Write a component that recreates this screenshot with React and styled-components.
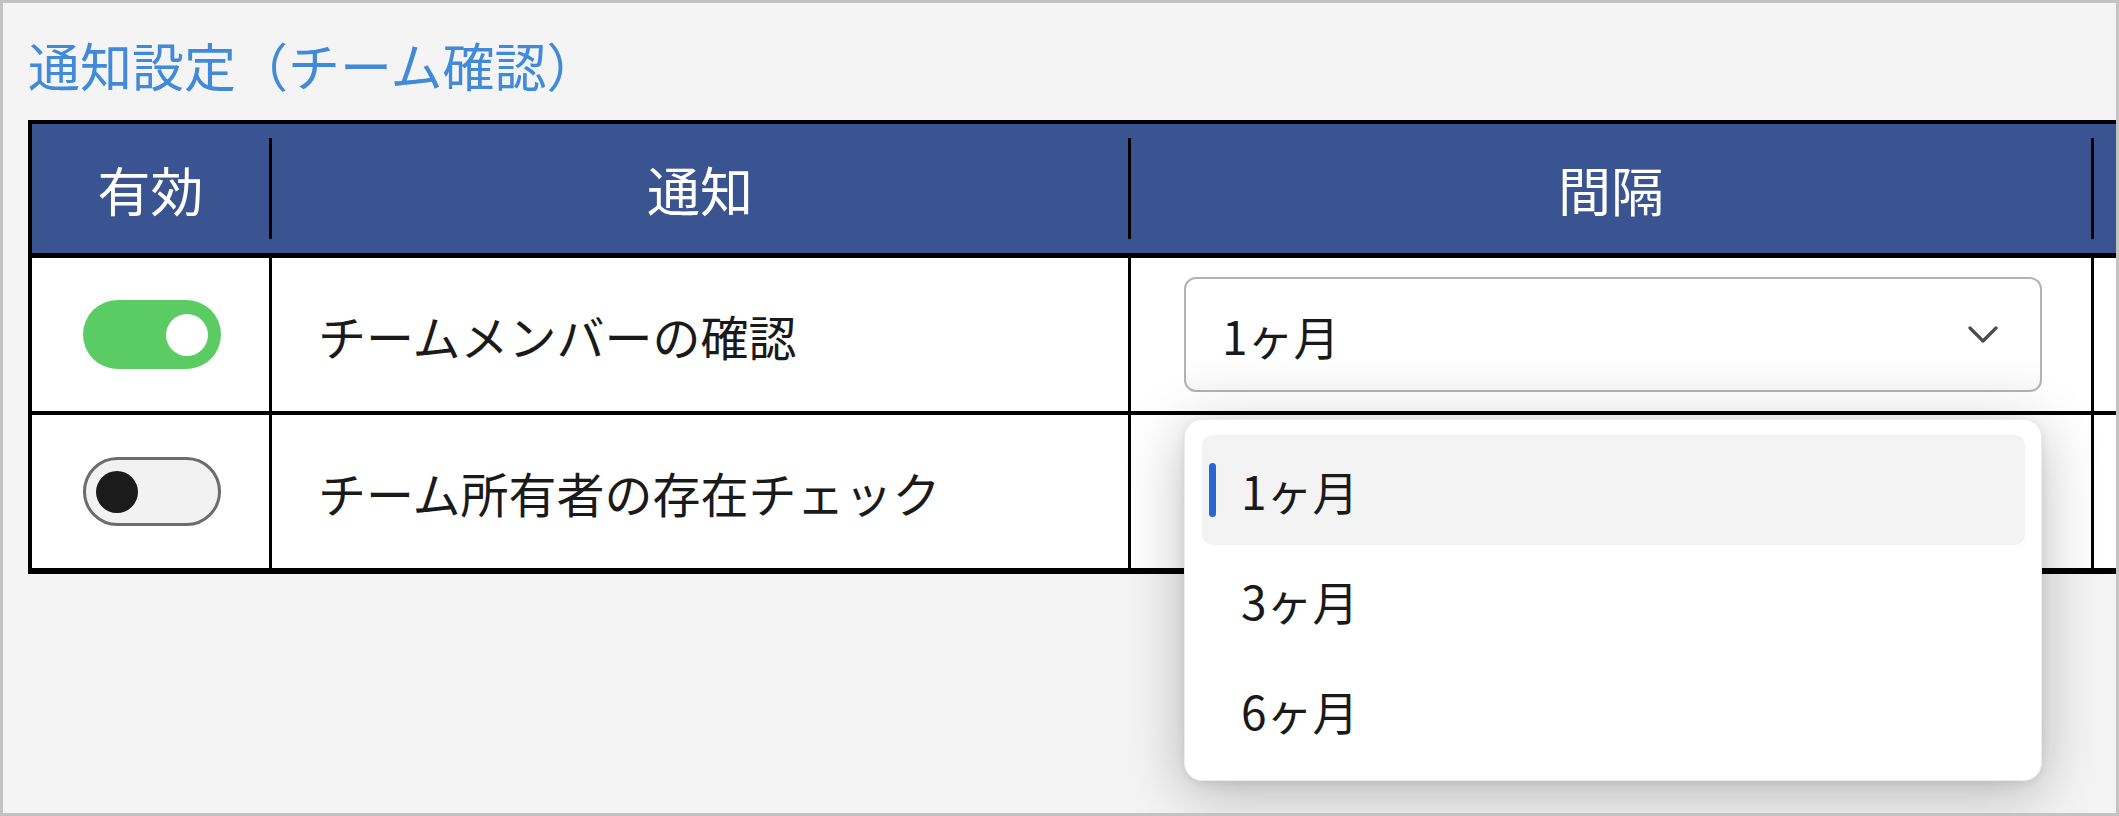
import React from 'react'
import styled, { createGlobalStyle } from 'styled-components'

const GlobalStyle = createGlobalStyle`
  body {
    margin: 0;
    background: #f4f4f4;
    font-family: "Noto Sans CJK JP", "Noto Sans", sans-serif;
  }
`

const COLS = '237px 859px 963px 200px'

const Frame = styled.div`
  width: 2119px;
  height: 816px;
  box-sizing: border-box;
  border: 3px solid #c3c3c3;
  background: #f4f4f4;
  overflow: hidden;
  padding: 31px 0 0 25px;
`

const Title = styled.h2`
  margin: 0 0 25px;
  font-size: 52px;
  line-height: 61px;
  font-weight: 400;
  color: #4189d9;
  white-space: nowrap;
`

const Table = styled.div`
  display: flex;
  flex-direction: column;
  width: max-content;
  border: 4px solid #000;
  border-bottom-width: 6px;
  background: #fff;
`

const HeaderRow = styled.div`
  display: grid;
  grid-template-columns: ${COLS};
  padding: 14px 0;
  background: #3a5491;
  border-bottom: 5px solid #000;
`

const HeadCell = styled.div`
  height: 101px;
  box-sizing: border-box;
  display: flex;
  align-items: center;
  justify-content: center;
  color: #fff;
  font-size: 53px;
  & + & {
    border-left: 3px solid #000;
  }
`

const BodyRow = styled.div`
  display: grid;
  grid-template-columns: ${COLS};
  height: 153px;
  border-bottom: 4px solid #000;
  &:last-child {
    border-bottom: none;
  }
`

const Cell = styled.div`
  box-sizing: border-box;
  display: flex;
  align-items: center;
  justify-content: ${({ $center }) => ($center ? 'center' : 'flex-start')};
  padding-left: ${({ $pad }) => $pad || 0}px;
  font-size: 48px;
  color: #1a1a1a;
  white-space: nowrap;
  & + & {
    border-left: 3px solid #000;
  }
`

const Toggle = styled.div`
  width: 138px;
  height: 69px;
  box-sizing: border-box;
  border-radius: 35px;
  display: flex;
  align-items: center;
  justify-content: ${({ $on }) => ($on ? 'flex-end' : 'flex-start')};
  padding: 0 ${({ $on }) => ($on ? 13 : 10)}px;
  background: ${({ $on }) => ($on ? '#5bcb63' : '#f2f2f2')};
  border: ${({ $on }) => ($on ? 'none' : '3px solid #6c6c6c')};
  margin-left: 2px;
`

const Knob = styled.span`
  width: 42px;
  height: 42px;
  border-radius: 50%;
  background: ${({ $on }) => ($on ? '#fff' : '#1b1b1b')};
`

const SelectWrap = styled.div`
  position: relative;
  width: 858px;
`

const SelectBox = styled.div`
  height: 115px;
  box-sizing: border-box;
  border: 2px solid #b3b3b3;
  border-radius: 12px;
  background: linear-gradient(#ffffff 70%, #f8f8f8);
  display: flex;
  align-items: center;
  justify-content: space-between;
  padding: 0 42px 0 36px;
  font-size: 46px;
  color: #1a1a1a;
  visibility: ${({ $covered }) => ($covered ? 'hidden' : 'visible')};
`

const Menu = styled.div`
  position: absolute;
  top: calc(100% + 27px);
  left: 0;
  width: 100%;
  box-sizing: border-box;
  padding: 15px 16px 15px 17px;
  background: #fff;
  border: 1px solid #ececec;
  border-radius: 18px;
  box-shadow: 0 12px 60px rgba(0, 0, 0, 0.26), 0 2px 10px rgba(0, 0, 0, 0.08);
  z-index: 10;
`

const MenuItem = styled.div`
  position: relative;
  height: 110px;
  display: flex;
  align-items: center;
  padding-left: 39px;
  border-radius: 10px;
  font-size: 46px;
  color: #1a1a1a;
  background: ${({ $active }) => ($active ? '#f3f3f3' : 'transparent')};
  &::before {
    content: '';
    display: ${({ $active }) => ($active ? 'block' : 'none')};
    position: absolute;
    left: 7px;
    top: 28px;
    width: 7px;
    height: 54px;
    border-radius: 4px;
    background: #2a66cf;
  }
`

const Chevron = () => (
  <svg width="30" height="19" viewBox="0 0 30 19">
    <polyline points="2,3 15,16 28,3" fill="none" stroke="#4d4d4d" strokeWidth="3.2" strokeLinecap="round" strokeLinejoin="round" />
  </svg>
)

const options = ['1ヶ月', '3ヶ月', '6ヶ月']

const rows = [
  { on: true, label: 'チームメンバーの確認', interval: '1ヶ月', open: true },
  { on: false, label: 'チーム所有者の存在チェック', interval: '1ヶ月', open: false, covered: true },
]

const App = () => {
  return (
    <Frame>
      <GlobalStyle />
      <Title>通知設定（チーム確認）</Title>
      <Table>
        <HeaderRow>
          <HeadCell>有効</HeadCell>
          <HeadCell>通知</HeadCell>
          <HeadCell>間隔</HeadCell>
          <HeadCell />
        </HeaderRow>
        {rows.map((r) => (
          <BodyRow key={r.label}>
            <Cell $center>
              <Toggle $on={r.on}>
                <Knob $on={r.on} />
              </Toggle>
            </Cell>
            <Cell $pad={46}>{r.label}</Cell>
            <Cell $pad={53}>
              <SelectWrap>
                <SelectBox $covered={r.covered}>
                  <span>{r.interval}</span>
                  <Chevron />
                </SelectBox>
                {r.open && (
                  <Menu>
                    {options.map((o) => (
                      <MenuItem key={o} $active={o === r.interval}>{o}</MenuItem>
                    ))}
                  </Menu>
                )}
              </SelectWrap>
            </Cell>
            <Cell />
          </BodyRow>
        ))}
      </Table>
    </Frame>
  )
}

export default App
